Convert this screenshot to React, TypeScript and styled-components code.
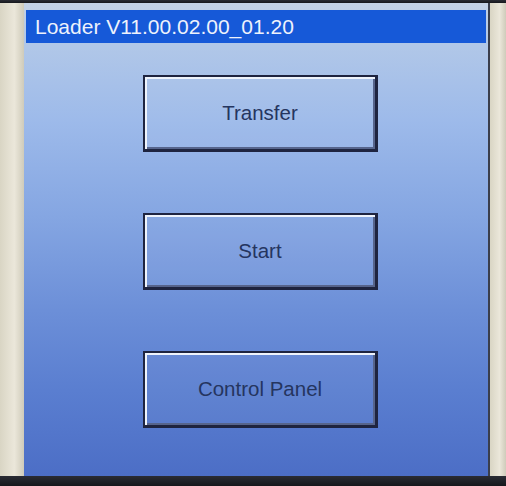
import React from "react";
import styled, { createGlobalStyle } from "styled-components";

const Global = createGlobalStyle`
  html, body { margin: 0; padding: 0; }
  body { width: 506px; height: 486px; overflow: hidden; background: #dcd8c8; }
`;

const Device = styled.div`
  width: 506px;
  height: 486px;
  display: flex;
  flex-direction: column;
  background: linear-gradient(90deg, #e6e2d4 0%, #d8d4c2 4%, #e2dece 5%, #e2dece 100%);
`;

const Edge = styled.div<{ $h: number }>`
  height: ${(p) => p.$h}px;
  flex: none;
  background: linear-gradient(180deg, #2a2c34, #16171c);
`;

const Middle = styled.div`
  flex: 1;
  display: flex;
`;

const Bezel = styled.div<{ $w: number }>`
  width: ${(p) => p.$w}px;
  flex: none;
  background: linear-gradient(90deg, #d9d5c4, #ebe7da 60%, #cfcbba);
`;

const Screen = styled.div`
  width: 466px;
  flex: none;
  display: flex;
  flex-direction: column;
  padding-top: 7px;
  box-sizing: border-box;
  border-right: 2px solid #3a3e4c;
  background: linear-gradient(
    180deg,
    #c4d2e6 0%,
    #b2c8e8 8%,
    #9dbaea 25%,
    #85a6e2 45%,
    #6c8fd8 65%,
    #5a7ed0 82%,
    #4c6ec6 100%
  );
`;

const TitleBar = styled.div`
  height: 33px;
  margin: 0 2px 0 2px;
  background: #1659d8;
  color: #eef2fc;
  font-family: "Liberation Sans", Arial, sans-serif;
  font-size: 21px;
  line-height: 33px;
  padding-left: 9px;
  white-space: nowrap;
`;

const ButtonColumn = styled.div`
  display: flex;
  flex-direction: column;
  gap: 61px;
  padding-top: 32px;
  padding-left: 119px;
`;

const PanelButton = styled.div`
  width: 235px;
  height: 77px;
  box-sizing: border-box;
  display: flex;
  align-items: center;
  justify-content: center;
  border: 2px solid #1e2440;
  border-right-width: 3px;
  border-bottom-width: 3px;
  box-shadow: inset 2px 2px 0 #eef3fb, inset -2px -2px 0 #56648c;
  background: rgba(255, 255, 255, 0.04);
  color: #25355f;
  font-family: "Liberation Sans", Arial, sans-serif;
  font-size: 20.5px;
`;

export default function App() {
  return (
    <>
      <Global />
      <Device>
        <Edge $h={3} />
        <Middle>
          <Bezel $w={24} />
          <Screen>
            <TitleBar>Loader V11.00.02.00_01.20</TitleBar>
            <ButtonColumn>
              <PanelButton>Transfer</PanelButton>
              <PanelButton>Start</PanelButton>
              <PanelButton>Control Panel</PanelButton>
            </ButtonColumn>
          </Screen>
          <Bezel $w={16} />
        </Middle>
        <Edge $h={10} />
      </Device>
    </>
  );
}
